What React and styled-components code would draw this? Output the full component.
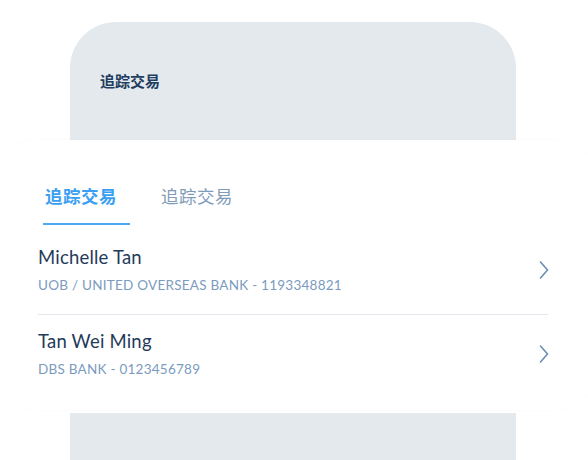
import React, { useState } from "react";
import styled, { createGlobalStyle } from "styled-components";

const Global = createGlobalStyle`
  html, body { margin: 0; padding: 0; background: #ffffff; }
  body {
    font-family: Lato, "Noto Sans", "Noto Sans CJK SC", sans-serif;
    -webkit-font-smoothing: antialiased;
  }
`;

const Page = styled.div`
  width: 588px;
  height: 460px;
  overflow: hidden;
  display: flex;
  flex-direction: column;
  padding-top: 22px;
  box-sizing: border-box;
`;

const HeaderCard = styled.div`
  margin: 0 72px 0 70px;
  height: 118px;
  background: #e4e9ee;
  border-radius: 46px 46px 0 0;
  display: flex;
  align-items: center;
  padding: 0 30px 2px;
  box-sizing: border-box;
`;

const HeaderTitle = styled.h1`
  margin: 0;
  font-family: "Noto Sans CJK SC", sans-serif;
  font-size: 15px;
  font-weight: 700;
  color: #1e3d60;
`;

const Sheet = styled.div`
  background: #fff;
  margin: 0 -20px;
  padding: 43px 60px 18px 58px;
  border-radius: 60px;
  box-shadow: 0 0 5px rgba(20, 40, 70, 0.02);
  display: flex;
  flex-direction: column;
`;

const Tabs = styled.div`
  display: flex;
  gap: 29px;
  padding-left: 5px;
`;

const Tab = styled.button`
  appearance: none;
  border: none;
  background: transparent;
  padding: 0 13px 14px 2px;
  margin: 0;
  font-family: "Noto Sans CJK SC", sans-serif;
  font-size: 17.5px;
  font-weight: ${(p) => (p.$active ? 700 : 400)};
  letter-spacing: 0.5px;
  line-height: 26px;
  color: ${(p) => (p.$active ? "#3a9ff2" : "#7f9bb8")};
  border-bottom: 2px solid ${(p) => (p.$active ? "#4aaaf5" : "transparent")};
  cursor: pointer;
`;

const List = styled.div`
  display: flex;
  flex-direction: column;
  margin-top: 6px;
`;

const Row = styled.div`
  display: flex;
  align-items: center;
  padding: 15px 0 ${(p) => (p.$last ? "14px" : "20px")};
  border-bottom: ${(p) => (p.$last ? "none" : "1px solid #e2e8ee")};
`;

const Info = styled.div`
  flex: 1;
  min-width: 0;
`;

const Name = styled.div`
  font-size: 18.5px;
  line-height: 22px;
  letter-spacing: 0.2px;
  color: #1f3a5b;
`;

const Sub = styled.div`
  margin-top: 8px;
  font-size: 13.5px;
  line-height: 18px;
  letter-spacing: 0.25px;
  color: #7b9bc0;
`;

const Chevron = styled.svg`
  width: 10px;
  height: 20px;
  flex: none;
  margin-right: -1px;
  color: #6b8db5;
`;

const FooterCard = styled.div`
  margin: 3px 72px 0 70px;
  flex: 1;
  background: #e4e9ee;
`;

const accounts = [
  { name: "Michelle Tan", bank: "UOB / UNITED OVERSEAS BANK - 1193348821" },
  { name: "Tan Wei Ming", bank: "DBS BANK - 0123456789" },
];

export default function App() {
  const [tab, setTab] = useState(0);
  return (
    <>
      <Global />
      <Page>
        <HeaderCard>
          <HeaderTitle>追踪交易</HeaderTitle>
        </HeaderCard>
        <Sheet>
          <Tabs>
            <Tab $active={tab === 0} onClick={() => setTab(0)}>追踪交易</Tab>
            <Tab $active={tab === 1} onClick={() => setTab(1)}>追踪交易</Tab>
          </Tabs>
          <List>
            {accounts.map((a, i) => (
              <Row key={a.name} $last={i === accounts.length - 1}>
                <Info>
                  <Name>{a.name}</Name>
                  <Sub>{a.bank}</Sub>
                </Info>
                <Chevron viewBox="0 0 10 20" fill="none">
                  <path d="M1.5 2l7 8-7 8" stroke="currentColor" strokeWidth="1.6" strokeLinecap="round" strokeLinejoin="round" />
                </Chevron>
              </Row>
            ))}
          </List>
        </Sheet>
        <FooterCard />
      </Page>
    </>
  );
}
